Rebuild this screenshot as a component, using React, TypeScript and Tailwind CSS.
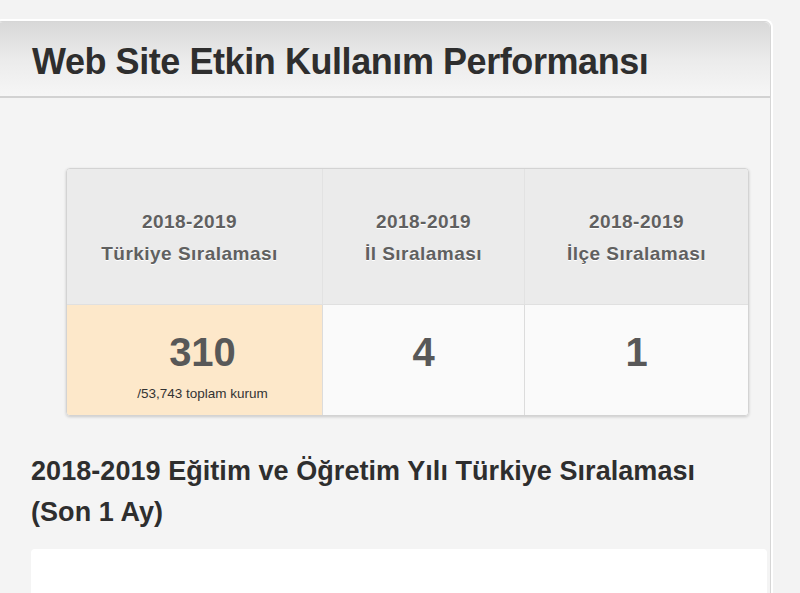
import React from 'react';

const font = { fontFamily: '"Liberation Sans", Arial, sans-serif' };

const cols = [
  { label: 'Türkiye Sıralaması', value: '310', sub: '/53,743 toplam kurum', hot: true },
  { label: 'İl Sıralaması', value: '4' },
  { label: 'İlçe Sıralaması', value: '1' },
];

export default function App() {
  return (
    <div className="w-full h-[593px] overflow-hidden bg-[#f3f3f3]" style={font}>
      <div className="ml-[-4px] mt-[21px] w-[775px] rounded-md border border-[#d6d6d6] shadow-[0_0_0_2px_#ffffff] bg-[#f4f4f4]">
        {/* panel header */}
        <div className="h-[76px] rounded-t-md bg-gradient-to-b from-[#d8d8d8] via-[#ebebeb] to-[#f6f6f6] border-b-2 border-[#d2d2d2] pl-[35px] pt-[20px]">
          <h1 className="text-[36px] leading-[40px] font-bold text-[#2e2e2e] tracking-[-0.012em]">
            Web Site Etkin Kullanım Performansı
          </h1>
        </div>

        {/* panel body */}
        <div className="pt-[70px] pl-[69px] pr-[20px]">
          <div className="w-[683px] rounded-[4px] border border-[#d3d3d3] shadow-[0_1px_3px_rgba(0,0,0,0.18)] overflow-hidden">
            <div className="grid grid-cols-[255px_202px_1fr] bg-[#ebebeb]">
              {cols.map((c, i) => (
                <div
                  key={c.label}
                  className={`h-[135px] flex flex-col items-center justify-center pt-[2px] text-[19px] leading-[32px] font-bold text-[#606060] [text-shadow:0_1px_0_#ffffff] ${i === 0 ? 'pr-[10px]' : 'border-l border-[#e2e2e2]'}`}
                >
                  <span className="tracking-[0.025em]">2018-2019</span>
                  <span className="tracking-[0.025em]">{c.label}</span>
                </div>
              ))}
            </div>
            <div className="grid grid-cols-[255px_202px_1fr] border-t border-[#e0e0e0]">
              {cols.map((c, i) => (
                <div
                  key={c.label}
                  className={`h-[110px] flex flex-col items-center ${c.hot ? 'bg-[#fde8ca] pl-[16px]' : 'bg-[#fafafa]'} ${i > 0 ? 'border-l border-[#dcdcdc]' : ''}`}
                >
                  <span className="mt-[23px] text-[40px] leading-[48px] font-bold text-[#585858]">{c.value}</span>
                  {c.sub && <span className="mt-[10px] text-[13.5px] leading-[16px] text-[#333]">{c.sub}</span>}
                </div>
              ))}
            </div>
          </div>

          <h2 className="ml-[-35px] mt-[35px] text-[27px] leading-[41px] font-bold text-[#2e2e2e] tracking-[0.002em]">
            2018-2019 Eğitim ve Öğretim Yılı Türkiye Sıralaması
            <br />
            (Son 1 Ay)
          </h2>

          <div className="ml-[-35px] mt-[16px] w-[736px] h-[60px] rounded-t-[4px] bg-white" />
        </div>
      </div>
    </div>
  );
}
